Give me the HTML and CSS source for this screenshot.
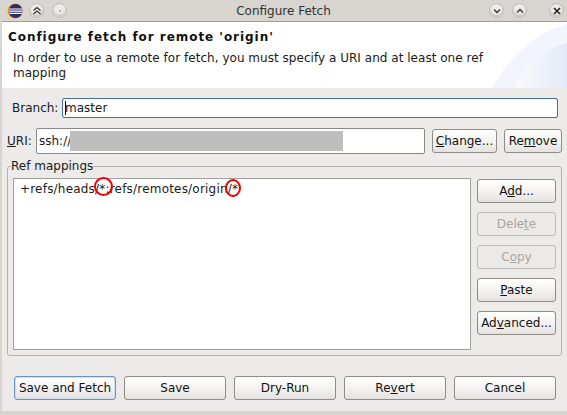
FILE: index.html
```html
<!DOCTYPE html>
<html>
	<head>
		<meta charset="UTF-8">
		<title>Configure Fetch</title>
		<link rel="stylesheet" href="styles.css">
	</head>
	<body>
		<div class="window">
			<div class="titlebar">
				<div class="tb-left">
					<svg class="eclipse" width="16" height="16" viewBox="0 0 16 16">
						<circle cx="8" cy="8" r="7.5" fill="#f39a1e"/>
						<circle cx="8.6" cy="8" r="6.9" fill="#2c2a6b"/>
						<path d="M2 6h13M1.8 8.2h13.6M2.2 10.4h12.6" stroke="#fff" stroke-width="1.2"/>
					</svg>
					<span class="tb-btn">
						<svg width="14" height="14" viewBox="0 0 14 14"><path d="M3.5 6.5 7 3.5l3.5 3M3.5 10 7 7l3.5 3" fill="none" stroke="#333" stroke-width="1.2"/></svg>
					</span>
					<span class="tb-btn">
						<svg width="14" height="14" viewBox="0 0 14 14"><circle cx="7" cy="7" r="0.8" fill="#666"/></svg>
					</span>
				</div>
				<div class="tb-title">Configure Fetch</div>
				<div class="tb-right">
					<span class="tb-btn">
						<svg width="14" height="14" viewBox="0 0 14 14"><path d="M4 5.5 7 8.5l3-3" fill="none" stroke="#333" stroke-width="1.3"/></svg>
					</span>
					<span class="tb-btn">
						<svg width="14" height="14" viewBox="0 0 14 14"><path d="M4 8.5 7 5.5l3 3" fill="none" stroke="#333" stroke-width="1.3"/></svg>
					</span>
					<span class="tb-btn tb-close">
						<svg width="14" height="14" viewBox="0 0 14 14"><path d="M4 4l6 6M10 4l-6 6" fill="none" stroke="#222" stroke-width="1.6"/></svg>
					</span>
				</div>
			</div>

			<div class="banner">
				<svg class="swoosh" width="85" height="67" viewBox="0 0 85 67">
					<defs>
						<linearGradient id="fade" x1="0" y1="0.5" x2="1" y2="0.5">
							<stop offset="0" stop-color="#fafbfe"/>
							<stop offset="1" stop-color="#e4e9f7"/>
						</linearGradient>
					</defs>
					<path d="M85 3C50 12 25 40 10 67H85Z" fill="#f3f5fc"/>
					<path d="M85 22C60 28 42 46 32 67H85Z" fill="url(#fade)"/>
				</svg>
				<h1>Configure fetch for remote 'origin'</h1>
				<p>In order to use a remote for fetch, you must specify a URI and at least one ref mapping</p>
			</div>

			<div class="content">
				<div class="row row-branch">
					<label class="lbl-branch">Branch:</label>
					<div class="input input-focus"><span class="caret"></span>master</div>
				</div>
				<div class="row row-uri">
					<label class="lbl-uri"><u>U</u>RI:</label>
					<div class="input input-uri"><span class="uri-text">ssh://</span><span class="blur"></span></div>
					<button class="btn btn-change"><u>C</u>hange...</button>
					<button class="btn btn-remove">Re<u>m</u>ove</button>
				</div>

				<fieldset class="group">
					<legend>Ref mappings</legend>
					<div class="list">
						<div class="list-item">+refs/heads/*:refs/remotes/origin/*</div>
						<span class="mark mark-1"></span>
						<span class="mark mark-2"></span>
					</div>
					<div class="side">
						<button class="btn">A<u>d</u>d...</button>
						<button class="btn" disabled>Dele<u>t</u>e</button>
						<button class="btn" disabled>C<u>o</u>py</button>
						<button class="btn"><u>P</u>aste</button>
						<button class="btn">Ad<u>v</u>anced...</button>
					</div>
				</fieldset>

				<div class="actions">
					<button class="btn btn-default">Save and Fetch</button>
					<button class="btn">Save</button>
					<button class="btn">Dry-Run</button>
					<button class="btn">Re<u>v</u>ert</button>
					<button class="btn">Cancel</button>
				</div>
			</div>
			<div class="bottom"></div>
		</div>
	</body>
</html>
```

FILE: styles.css
```css
* { box-sizing: border-box; }
html, body { margin: 0; padding: 0; }
body { font-family: "DejaVu Sans", sans-serif; font-size: 12px; color: #1a1a1a; background: #ecebe9; }

.window { width: 567px; height: 415px; display: flex; flex-direction: column; overflow: hidden; background: #ecebe9; border-left: 2px solid #d8d5d1; }

.titlebar { height: 22px; margin-left: -2px; flex: none; display: flex; align-items: center; justify-content: space-between; position: relative; background: #d8d5d1; border-bottom: 1px solid #a19c96; }
.tb-left { display: flex; align-items: center; padding-left: 7px; }
.tb-right { display: flex; align-items: center; padding-right: 3px; }
.tb-title { position: absolute; left: 0; right: 0; text-align: center; color: #333; font-size: 12px; }
.eclipse { margin-right: 6px; }
.tb-btn { width: 15px; height: 15px; margin-right: 8px; border-radius: 50%; background: #ecebe9; border: 1px solid #bdb9b4; display: flex; align-items: center; justify-content: center; box-shadow: inset 0 -2px 2px #c9c6c2; }
.tb-btn svg { flex: none; }
.tb-right .tb-btn { margin: 0 0 0 8px; }
.tb-right .tb-close { margin-left: 22px; }

.banner { height: 66px; flex: none; position: relative; background: #fff; padding: 7px 6px 0; }
.swoosh { position: absolute; right: 0; bottom: 0; }
.banner h1 { position: relative; margin: 0; font-size: 12px; line-height: 16px; font-weight: bold; letter-spacing: 0.95px; color: #111; }
.banner p { position: relative; margin: 6px 0 0 5px; width: 500px; font-size: 12px; line-height: 15px; letter-spacing: 0.03px; }

.content { flex: 1; padding: 10px 5px 0 8px; display: flex; flex-direction: column; }

.row { display: flex; align-items: center; }
.row-branch { height: 20px; }
.row-uri { height: 26px; margin-top: 10px; }
.lbl-branch { width: 52px; padding-left: 2px; }
.lbl-uri { width: 29px; margin-left: -3px; }
.input { height: 100%; background: #fff; border: 1px solid #888; border-radius: 2px; line-height: 18px; padding-left: 2px; position: relative; white-space: nowrap; }
.input-focus { width: 496px; border-color: #4a6f9e; }
.caret { position: absolute; left: 2px; top: 2px; width: 1px; height: 14px; background: #000; }
.input-uri { width: 389px; display: flex; align-items: center; }
.uri-text { width: 31px; overflow: hidden; }
.blur { width: 273px; height: 20px; background: #bebebe; }

.btn { height: 24px; padding: 0; font: inherit; color: #111; background: linear-gradient(#ffffff, #f4f3f2 50%, #e4e2e0); border: 1px solid #8f8c88; border-radius: 3px; text-align: center; }
.btn:disabled { color: #a8a6a3; background: #eceae8; border-color: #bcb9b6; }
.btn-change { width: 65px; margin-left: 7px; }
.btn-remove { width: 58px; margin-left: 7px; }

.group { margin: 5px 0 0 -3px; padding: 0; width: 555px; height: 197px; display: flex; position: relative; border: 1px solid #b3b0ac; border-radius: 3px; }
.group legend { margin-left: 3px; padding: 0; font-size: 12px; line-height: 14px; }
.list { position: relative; width: 458px; height: 172px; margin: 5px 0 0 5px; background: #fff; border: 1px solid #a2a09c; padding: 2px 0 0 6px; }
.list-item { line-height: 16px; white-space: nowrap; letter-spacing: 0.2px; }
.mark { position: absolute; border: 2px solid #f00000; border-radius: 50%; }
.mark-1 { left: 80px; top: -2px; width: 19px; height: 19px; }
.mark-2 { left: 211px; top: 0; width: 16px; height: 18px; }
.side { display: flex; flex-direction: column; gap: 9px; margin: 6px 0 0 6px; width: 79px; }
.side .btn { width: 79px; }

.actions { display: flex; gap: 8px; margin-top: 20px; margin-left: 4px; }
.actions .btn { width: 102px; }
.btn-default { border-color: #6f93bd; box-shadow: inset 0 0 0 1px #cfdcec; }

.bottom { height: 4px; flex: none; margin-left: -2px; background: #d8d5d1; }
```
